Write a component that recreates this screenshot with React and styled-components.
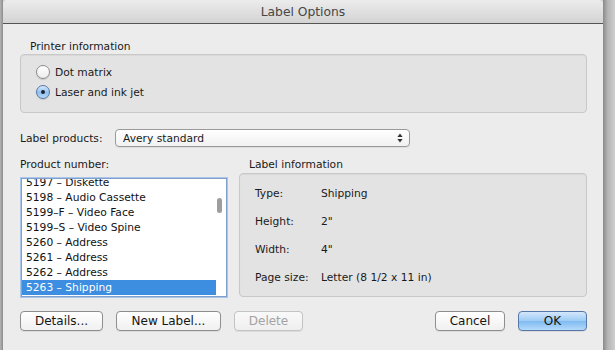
import React from "react";
import styled, { createGlobalStyle } from "styled-components";

const Global = createGlobalStyle`
  html, body { margin: 0; padding: 0; background: #d6d6d6; }
  body { font-family: "DejaVu Sans", "Noto Sans", sans-serif; color: #1a1a1a; }
  #root { width: 615px; height: 350px; overflow: hidden; }
`;

const Desk = styled.div`
  display: flex;
  width: 615px;
  height: 350px;
  overflow: hidden;
`;

const LeftEdge = styled.div`
  width: 3px;
  flex: none;
  background: linear-gradient(to right, #b4b4b4, #8c8c8c);
`;

const RightShadow = styled.div`
  width: 12px;
  flex: none;
  background: linear-gradient(to right, #8a8a8a, #b5b5b5 40%, #cfcfcf);
`;

const Window = styled.div`
  width: 600px;
  flex: none;
  display: flex;
  flex-direction: column;
  background: #ececec;
  border-radius: 5px 5px 0 0;
  overflow: hidden;
`;

const TitleBar = styled.div`
  flex: none;
  display: flex;
  align-items: center;
  justify-content: center;
  background: linear-gradient(to bottom, #ececec, #d3d3d3);
  border-bottom: 1px solid #545454;
  font-size: 12.3px;
  color: #474747;
  padding-top: 1px;
  box-sizing: border-box;
  height: 24px;
`;

const Content = styled.div`
  padding: 16px 16px 0 17px;
  display: flex;
  flex-direction: column;
  font-size: 10.7px;
`;

const Caption = styled.div`
  line-height: 14px;
  height: 14px;
  padding-left: ${(p) => p.$indent || 0}px;
`;

const GroupBox = styled.div`
  background: #e3e3e3;
  border: 1px solid #c8c8c8;
  border-radius: 4px;
  box-shadow: inset 0 1px 1px rgba(0, 0, 0, 0.05);
  margin-top: ${(p) => p.$top || 0}px;
`;

const RadioList = styled.div`
  display: flex;
  flex-direction: column;
  padding: 7px 0 10px 15px;
`;

const RadioRow = styled.div`
  display: flex;
  align-items: center;
  height: 20px;
  gap: 5px;
`;

const RadioCircle = styled.span`
  width: 14px;
  height: 14px;
  box-sizing: border-box;
  border-radius: 50%;
  display: flex;
  align-items: center;
  justify-content: center;
  border: 1px solid ${(p) => (p.$on ? "#5776a3" : "#8c8c8c")};
  background: ${(p) =>
    p.$on
      ? "linear-gradient(to bottom, #d7e9fb, #8fc1f1 55%, #b6d8f8)"
      : "linear-gradient(to bottom, #ffffff, #ececec)"};
  box-shadow: 0 1px 1px rgba(0, 0, 0, 0.12);
  &::after {
    content: "";
    display: ${(p) => (p.$on ? "block" : "none")};
    width: 4px;
    height: 4px;
    border-radius: 50%;
    background: #1c2430;
  }
`;

const FieldRow = styled.div`
  display: flex;
  align-items: center;
  margin-top: 16px;
  height: 18px;
`;

const FieldLabel = styled.div`
  width: 95px;
  flex: none;
`;

const Select = styled.div`
  width: 295px;
  height: 18px;
  box-sizing: border-box;
  border: 1px solid #9a9a9a;
  border-radius: 4px;
  background: linear-gradient(to bottom, #ffffff, #f1f1f1);
  box-shadow: 0 1px 0 rgba(0, 0, 0, 0.06);
  display: flex;
  align-items: center;
  justify-content: space-between;
  padding: 0 6px 0 7px;
`;

const Columns = styled.div`
  display: flex;
  gap: 11px;
  margin-top: 11px;
`;

const LeftCol = styled.div`
  width: 208px;
  flex: none;
  display: flex;
  flex-direction: column;
`;

const RightCol = styled.div`
  flex: 1;
  display: flex;
  flex-direction: column;
`;

const ListBox = styled.div`
  position: relative;
  margin-top: 6px;
  margin-left: 1px;
  width: 206px;
  height: 119px;
  box-sizing: border-box;
  border: 1px solid #7f9fcc;
  box-shadow: 0 0 0 1px #a9c5e8;
  background: #ffffff;
  overflow: hidden;
`;

const ListInner = styled.div`
  margin-top: -4px;
  display: flex;
  flex-direction: column;
`;

const ListItem = styled.div`
  height: 15px;
  line-height: 15px;
  width: 194px;
  padding-left: 4px;
  box-sizing: border-box;
  white-space: nowrap;
  background: ${(p) => (p.$sel ? "#3d8de0" : "transparent")};
  color: ${(p) => (p.$sel ? "#ffffff" : "#111111")};
`;

const ScrollThumb = styled.div`
  position: absolute;
  right: 4px;
  top: 19px;
  width: 5px;
  height: 15px;
  border-radius: 3px;
  background: #9e9e9e;
`;

const InfoBox = styled(GroupBox)`
  height: 124px;
  box-sizing: border-box;
  display: grid;
  grid-template-columns: 66px 1fr;
  grid-auto-rows: 28px;
  align-items: center;
  padding: 6px 0 0 15px;
  align-content: start;
`;

const InfoCell = styled.div`
  line-height: 14px;
`;

const ButtonRow = styled.div`
  display: flex;
  align-items: center;
  margin-top: 14px;
  gap: 13px;
`;

const Spacer = styled.div`
  flex: 1;
`;

const Button = styled.button`
  width: ${(p) => p.$w}px;
  height: 20px;
  box-sizing: border-box;
  border-radius: 4px;
  font-family: "DejaVu Sans", sans-serif;
  font-size: 12px;
  padding: 0;
  display: flex;
  align-items: center;
  justify-content: center;
  color: ${(p) => (p.$disabled ? "#a3a3a3" : "#151515")};
  border: 1px solid
    ${(p) => (p.$primary ? "#5677a8" : p.$disabled ? "#c3c3c3" : "#8e8e8e")};
  background: ${(p) =>
    p.$primary
      ? "linear-gradient(to bottom, #d3e7fb, #9ccbf5 50%, #7fbaf1 51%, #b4dafb)"
      : p.$disabled
      ? "linear-gradient(to bottom, #f9f9f9, #efefef)"
      : "linear-gradient(to bottom, #ffffff, #f0f0f0)"};
  box-shadow: 0 1px 0 rgba(0, 0, 0, 0.07);
`;

const products = [
  "5197 – Diskette",
  "5198 – Audio Cassette",
  "5199–F – Video Face",
  "5199–S – Video Spine",
  "5260 – Address",
  "5261 – Address",
  "5262 – Address",
  "5263 – Shipping",
  "5264 – Shipping",
];

const info = [
  ["Type:", "Shipping"],
  ["Height:", "2\""],
  ["Width:", "4\""],
  ["Page size:", "Letter (8 1/2 x 11 in)"],
];

function UpDown() {
  return (
    <svg width="6" height="10" viewBox="0 0 6 10">
      <path d="M3 0.5 L5.6 4 H0.4 Z" fill="#333" />
      <path d="M3 9.5 L5.6 6 H0.4 Z" fill="#333" />
    </svg>
  );
}

export default function App() {
  return (
    <>
      <Global />
      <Desk>
        <LeftEdge />
        <Window>
          <TitleBar>Label Options</TitleBar>
          <Content>
            <Caption $indent={10}>Printer information</Caption>
            <GroupBox>
              <RadioList>
                <RadioRow>
                  <RadioCircle />
                  <span>Dot matrix</span>
                </RadioRow>
                <RadioRow>
                  <RadioCircle $on />
                  <span>Laser and ink jet</span>
                </RadioRow>
              </RadioList>
            </GroupBox>
            <FieldRow>
              <FieldLabel>Label products:</FieldLabel>
              <Select>
                <span>Avery standard</span>
                <UpDown />
              </Select>
            </FieldRow>
            <Columns>
              <LeftCol>
                <Caption>Product number:</Caption>
                <ListBox>
                  <ListInner>
                    {products.map((p) => (
                      <ListItem key={p} $sel={p === "5263 – Shipping"}>
                        {p}
                      </ListItem>
                    ))}
                  </ListInner>
                  <ScrollThumb />
                </ListBox>
              </LeftCol>
              <RightCol>
                <Caption $indent={10}>Label information</Caption>
                <InfoBox $top={1}>
                  {info.map(([k, v]) => (
                    <React.Fragment key={k}>
                      <InfoCell>{k}</InfoCell>
                      <InfoCell>{v}</InfoCell>
                    </React.Fragment>
                  ))}
                </InfoBox>
              </RightCol>
            </Columns>
            <ButtonRow>
              <Button $w={83}>Details...</Button>
              <Button $w={105}>New Label...</Button>
              <Button $w={69} $disabled>Delete</Button>
              <Spacer />
              <Button $w={70}>Cancel</Button>
              <Button $w={69} $primary>OK</Button>
            </ButtonRow>
          </Content>
        </Window>
        <RightShadow />
      </Desk>
    </>
  );
}
